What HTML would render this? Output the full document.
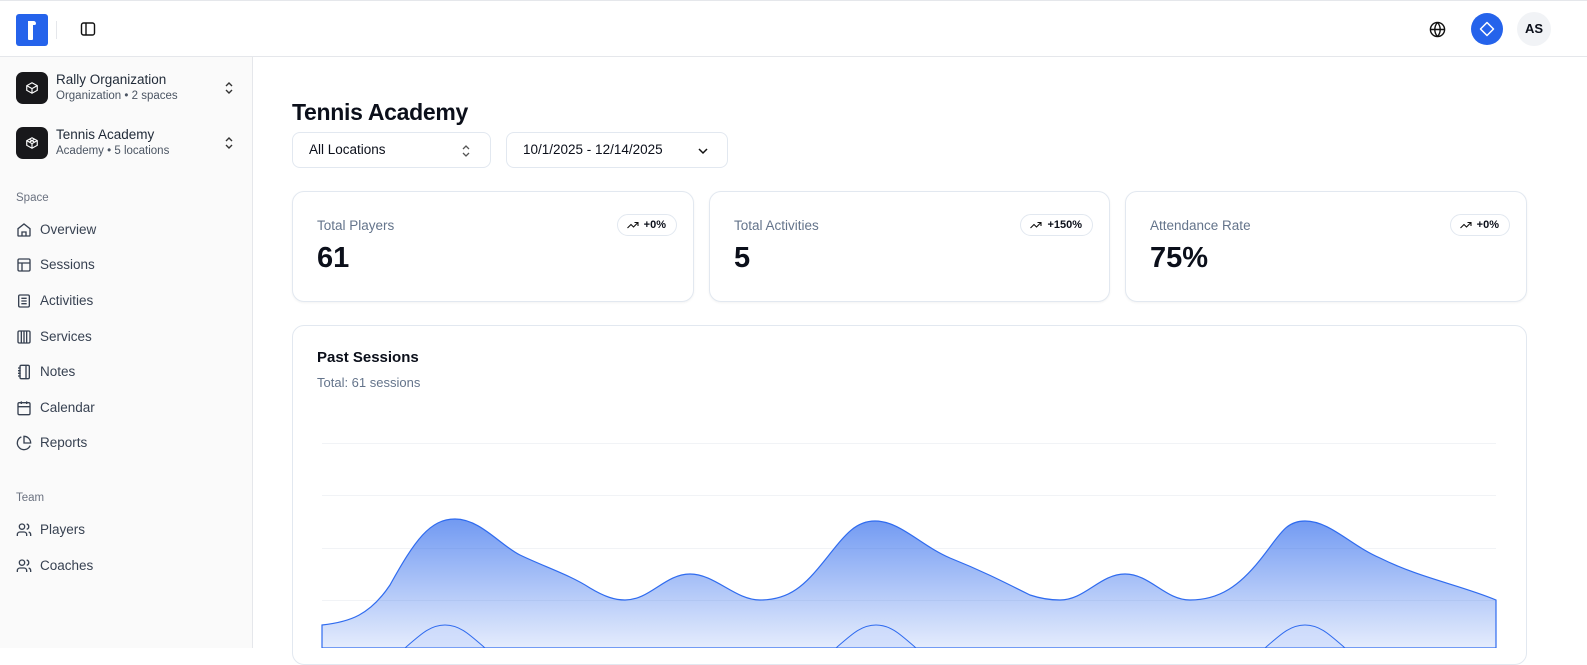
<!DOCTYPE html>
<html><head><meta charset="utf-8">
<style>
*{box-sizing:border-box;margin:0;padding:0}
body{width:1587px;height:648px;overflow:hidden;font-family:"Liberation Sans",sans-serif;background:#fff;color:#0b0f1a;position:relative}
.top{position:absolute;left:0;top:0;width:1587px;height:57px;border-top:1px solid #e5e7eb;border-bottom:1px solid #e5e7eb;background:#fff}
.side{position:absolute;left:0;top:57px;width:253px;height:591px;background:#fafafa;border-right:1px solid #e5e7eb}
.logo{position:absolute;left:16px;top:13px;width:32px;height:32px;background:#2563eb;border-radius:3px}
.logo:after{content:"";position:absolute;left:12px;top:7px;width:5px;height:19px;background:#fff;border-radius:1px}
.logo:before{content:"";position:absolute;left:12px;top:7px;width:8px;height:4px;background:#fff;border-radius:0 3px 2px 0}
.sep{position:absolute;left:56px;top:20px;width:1px;height:18px;background:#e5e7eb}
.org{position:absolute;left:16px;width:225px;height:32px}
.org .ic{position:absolute;left:0;top:0;width:32px;height:32px;border-radius:7px;background:#18181b}
.org .t{position:absolute;left:40px;top:0;font-size:13.5px;color:#1f2937}
.org .s{position:absolute;left:40px;top:18px;font-size:11.5px;color:#4b5563}
.org svg.ch{position:absolute;right:6px;top:8px}
.sec{position:absolute;left:16px;font-size:11.5px;color:#6b7280}
.nav{position:absolute;left:16px;font-size:13.5px;color:#374151;height:20px;line-height:20px}
.nav svg{position:absolute;left:0;top:2px}
.nav span{position:absolute;left:24px;top:0;white-space:nowrap}
h1{position:absolute;left:292px;top:99px;font-size:23px;font-weight:700;letter-spacing:-0.3px}
.sel{position:absolute;top:132px;height:36px;border:1px solid #e2e8f0;border-radius:8px;background:#fff;font-size:13.5px;line-height:34px;padding-left:16px}
.card{position:absolute;top:191px;height:111px;border:1px solid #e2e8f0;border-radius:12px;background:#fff;box-shadow:0 1px 2px rgba(0,0,0,.05)}
.card .l{position:absolute;left:24px;top:26px;font-size:13.5px;color:#64748b}
.card .v{position:absolute;left:24px;top:50px;font-size:29px;font-weight:700}
.badge{position:absolute;top:22px;height:22px;border:1px solid #e2e8f0;border-radius:11px;font-size:11px;font-weight:700;line-height:20px;padding:0 10px 0 26px}
.badge svg{position:absolute;left:9px;top:5px}
.chart{position:absolute;left:292px;top:325px;width:1235px;height:340px;border:1px solid #e2e8f0;border-radius:12px;background:#fff}
</style></head><body>
<div class="top">
<div class="logo"></div><div class="sep"></div>
<svg style="position:absolute;left:80px;top:20px" width="16" height="16" viewBox="0 0 16 16" fill="none" stroke="#111" stroke-width="1.4"><rect x="1.5" y="2" width="13" height="12" rx="2"/><line x1="6" y1="2" x2="6" y2="14"/></svg>
<svg style="position:absolute;left:1429px;top:20px" width="17" height="17" viewBox="0 0 24 24" fill="none" stroke="#111" stroke-width="2"><circle cx="12" cy="12" r="10"/><path d="M2 12h20M12 2a15 15 0 0 1 0 20M12 2a15 15 0 0 0 0 20"/></svg>
<div style="position:absolute;left:1471px;top:12px;width:32px;height:32px;border-radius:50%;background:#2563eb"><svg style="position:absolute;left:8px;top:8px" width="16" height="16" viewBox="0 0 16 16" fill="none" stroke="#fff" stroke-width="1.5"><path d="M8 1.5L14.5 8L8 14.5L1.5 8Z" stroke-linejoin="round"/></svg></div>
<div style="position:absolute;left:1517px;top:11px;width:34px;height:34px;border-radius:50%;background:#f1f3f6;font-size:13px;font-weight:700;text-align:center;line-height:34px">AS</div>
</div>
<div class="side">
<div class="org" style="top:15px"><div class="ic"><svg style="position:absolute;left:9px;top:9px" width="14" height="14" viewBox="0 0 24 24" fill="none" stroke="#fff" stroke-width="2"><path d="M21 8l-9-5-9 5v8l9 5 9-5z"/><path d="M3 8l9 5 9-5M12 13v8"/></svg></div><div class="t">Rally Organization</div><div class="s">Organization • 2 spaces</div><svg class="ch" width="12" height="16" viewBox="0 0 12 16" fill="none" stroke="#333" stroke-width="1.4"><path d="M3 6l3-3 3 3M3 10l3 3 3-3"/></svg></div>
<div class="org" style="top:70px"><div class="ic"><svg style="position:absolute;left:9px;top:9px" width="14" height="14" viewBox="0 0 24 24" fill="none" stroke="#fff" stroke-width="2"><path d="M21 8l-9-5-9 5v8l9 5 9-5z"/><path d="M3 8l9 5 9-5M12 13v8M7.5 5.5l9 5M16.5 5.5l-9 5"/></svg></div><div class="t">Tennis Academy</div><div class="s">Academy • 5 locations</div><svg class="ch" width="12" height="16" viewBox="0 0 12 16" fill="none" stroke="#333" stroke-width="1.4"><path d="M3 6l3-3 3 3M3 10l3 3 3-3"/></svg></div>
<div class="sec" style="top:135px">Space</div>
<div class="nav" style="top:163px"><svg width="16" height="16" viewBox="0 0 24 24" fill="none" stroke="#374151" stroke-width="2"><path d="M3 10l9-7 9 7v10a1 1 0 0 1-1 1H4a1 1 0 0 1-1-1z"/><path d="M9 21v-6h6v6"/></svg><span>Overview</span></div>
<div class="nav" style="top:198px"><svg width="16" height="16" viewBox="0 0 24 24" fill="none" stroke="#374151" stroke-width="2"><rect x="3" y="3" width="18" height="18" rx="2"/><path d="M3 9h18M9 9v12"/></svg><span>Sessions</span></div>
<div class="nav" style="top:234px"><svg width="16" height="16" viewBox="0 0 24 24" fill="none" stroke="#374151" stroke-width="2"><rect x="4" y="3" width="16" height="18" rx="2"/><path d="M8 8h8M8 12h8M8 16h8"/></svg><span>Activities</span></div>
<div class="nav" style="top:270px"><svg width="16" height="16" viewBox="0 0 24 24" fill="none" stroke="#374151" stroke-width="2"><rect x="3" y="3" width="18" height="18" rx="2"/><path d="M8 3v18M12 3v18M16 3v18"/></svg><span>Services</span></div>
<div class="nav" style="top:305px"><svg width="16" height="16" viewBox="0 0 24 24" fill="none" stroke="#374151" stroke-width="2"><rect x="6" y="2" width="14" height="20" rx="2"/><path d="M3 6h4M3 10h4M3 14h4M3 18h4M15 2v20"/></svg><span>Notes</span></div>
<div class="nav" style="top:341px"><svg width="16" height="16" viewBox="0 0 24 24" fill="none" stroke="#374151" stroke-width="2"><rect x="3" y="4" width="18" height="18" rx="2"/><path d="M16 2v4M8 2v4M3 10h18"/></svg><span>Calendar</span></div>
<div class="nav" style="top:376px"><svg width="16" height="16" viewBox="0 0 24 24" fill="none" stroke="#374151" stroke-width="2"><path d="M21.2 15.9A10 10 0 1 1 8 2.8"/><path d="M22 12A10 10 0 0 0 12 2v10z"/></svg><span>Reports</span></div>
<div class="sec" style="top:435px">Team</div>
<div class="nav" style="top:463px"><svg width="16" height="16" viewBox="0 0 24 24" fill="none" stroke="#374151" stroke-width="2"><circle cx="9" cy="7" r="4"/><path d="M2 21v-2a4 4 0 0 1 4-4h6a4 4 0 0 1 4 4v2M16 3.1a4 4 0 0 1 0 7.8M22 21v-2a4 4 0 0 0-3-3.9"/></svg><span>Players</span></div>
<div class="nav" style="top:499px"><svg width="16" height="16" viewBox="0 0 24 24" fill="none" stroke="#374151" stroke-width="2"><circle cx="9" cy="7" r="4"/><path d="M2 21v-2a4 4 0 0 1 4-4h6a4 4 0 0 1 4 4v2M16 3.1a4 4 0 0 1 0 7.8M22 21v-2a4 4 0 0 0-3-3.9"/></svg><span>Coaches</span></div>
</div>
<h1>Tennis Academy</h1>
<div class="sel" style="left:292px;width:199px">All Locations<svg style="position:absolute;right:18px;top:10px" width="12" height="16" viewBox="0 0 12 16" fill="none" stroke="#555" stroke-width="1.3"><path d="M3 6l3-3 3 3M3 10l3 3 3-3"/></svg></div>
<div class="sel" style="left:506px;width:222px">10/1/2025 - 12/14/2025<svg style="position:absolute;right:18px;top:12px" width="12" height="12" viewBox="0 0 12 12" fill="none" stroke="#111" stroke-width="1.5"><path d="M2 4l4 4 4-4"/></svg></div>
<div class="card" style="left:292px;width:402px"><div class="l">Total Players</div><div class="v">61</div><div class="badge" style="right:16px">+0%<svg width="12" height="10" viewBox="0 0 24 16" fill="none" stroke="#111" stroke-width="2.2"><path d="M1 14l7-7 5 5 9-9M15 3h7v7"/></svg></div></div>
<div class="card" style="left:709px;width:401px"><div class="l">Total Activities</div><div class="v">5</div><div class="badge" style="right:16px">+150%<svg width="12" height="10" viewBox="0 0 24 16" fill="none" stroke="#111" stroke-width="2.2"><path d="M1 14l7-7 5 5 9-9M15 3h7v7"/></svg></div></div>
<div class="card" style="left:1125px;width:402px"><div class="l">Attendance Rate</div><div class="v">75%</div><div class="badge" style="right:16px">+0%<svg width="12" height="10" viewBox="0 0 24 16" fill="none" stroke="#111" stroke-width="2.2"><path d="M1 14l7-7 5 5 9-9M15 3h7v7"/></svg></div></div>
<div class="chart">
<div style="position:absolute;left:24px;top:23px;font-size:15px;font-weight:700">Past Sessions</div>
<div style="position:absolute;left:24px;top:49px;font-size:13px;color:#64748b">Total: 61 sessions</div>
</div>
<svg style="position:absolute;left:0;top:0" width="1587" height="648">
<defs><linearGradient id="g" x1="0" y1="519" x2="0" y2="648" gradientUnits="userSpaceOnUse"><stop offset="0" stop-color="#2563eb" stop-opacity=".65"/><stop offset="1" stop-color="#2563eb" stop-opacity=".12"/></linearGradient></defs>
<g stroke="#f1f3f6" stroke-width="1"><line x1="322" y1="443.5" x2="1496" y2="443.5"/><line x1="322" y1="495.5" x2="1496" y2="495.5"/><line x1="322" y1="548.5" x2="1496" y2="548.5"/><line x1="322" y1="600.5" x2="1496" y2="600.5"/></g>
<path fill="url(#g)" stroke="#2f6bef" stroke-width="1.2" d="M322,625 C350,622 370,615 390,585 C415,540 430,519 455,519 C480,519 500,545 520,555 C545,567 570,575 590,588 C605,597 615,600 625,600 C650,600 665,574 690,574 C715,574 735,600 760,600 C790,600 805,585 825,560 C845,535 855,521 875,521 C900,521 920,545 950,558 C980,570 1000,580 1030,595 C1045,600 1055,600 1060,600 C1085,600 1100,574 1125,574 C1150,574 1165,600 1190,600 C1220,600 1240,585 1260,560 C1280,535 1285,521 1305,521 C1330,521 1350,545 1380,558 C1420,578 1460,585 1496,600 L1496,648 L322,648 Z"/>
<path fill="#c9d8fb" fill-opacity=".6" stroke="#2f6bef" stroke-width="1" d="M405,648 C420,635 430,625 445,625 C460,625 470,635 485,648 Z M836,648 C851,635 861,625 876,625 C891,625 901,635 916,648 Z M1265,648 C1280,635 1290,625 1305,625 C1320,625 1330,635 1345,648 Z"/>
</svg>
</body></html>
